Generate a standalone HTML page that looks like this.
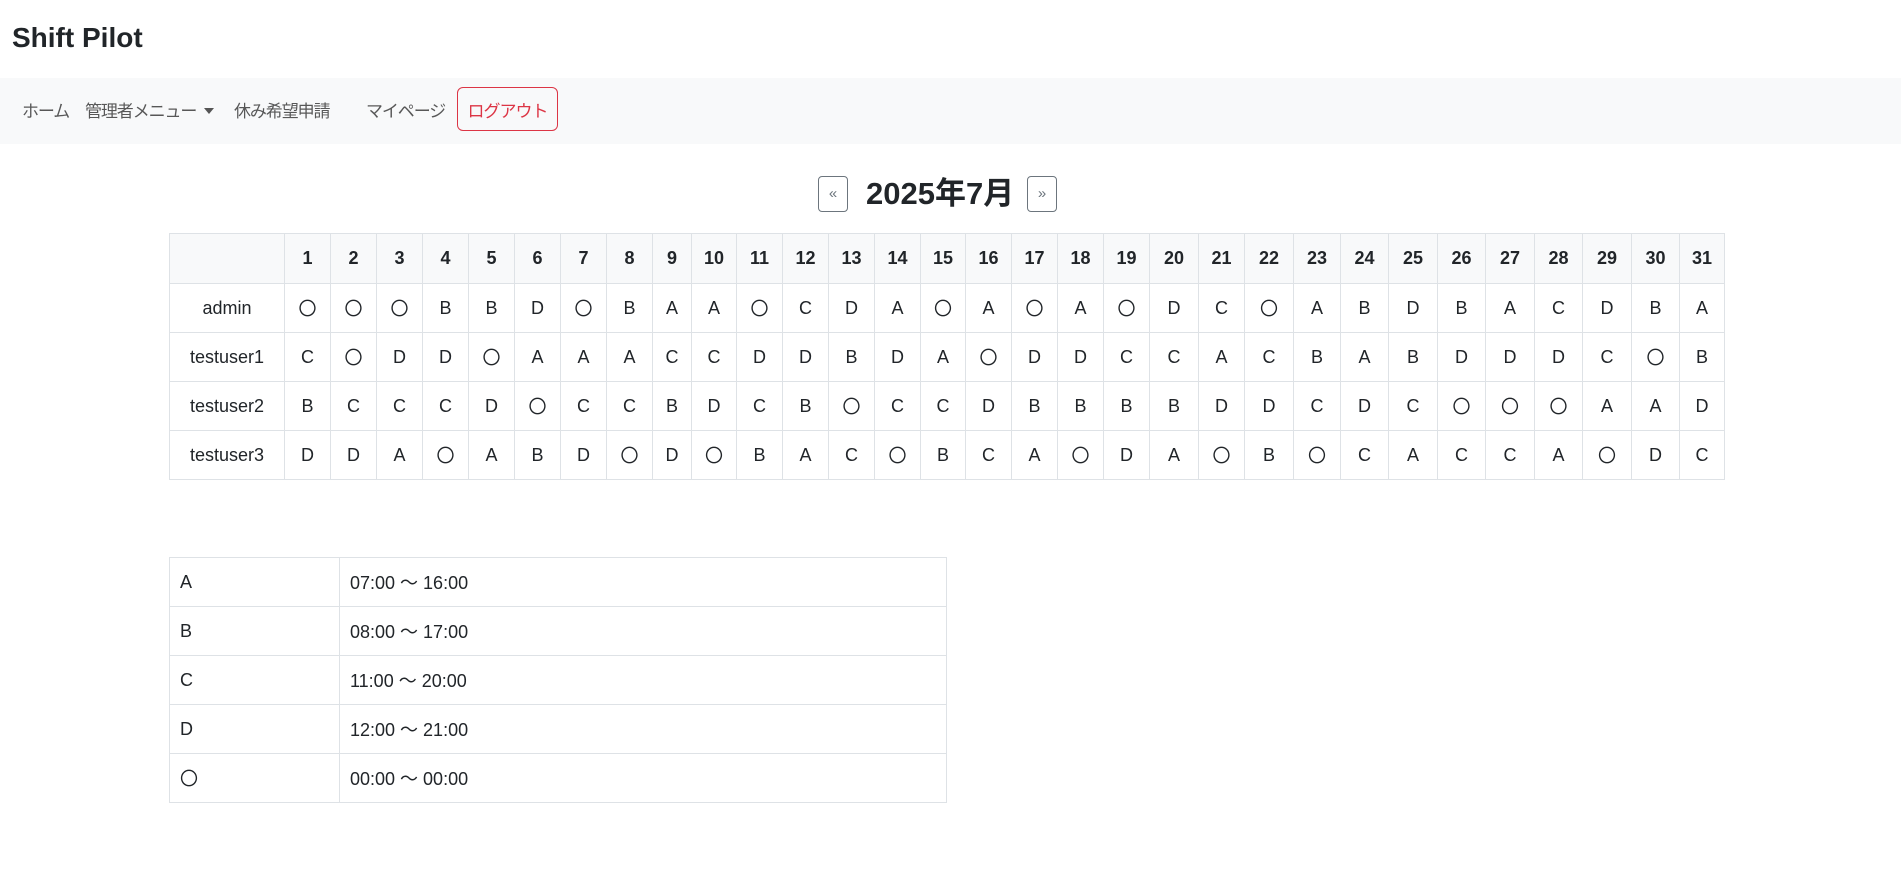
<!DOCTYPE html>
<html><head><meta charset="utf-8"><style>
*{box-sizing:border-box}
body{margin:0;width:1901px;height:887px;overflow:hidden;background:#fff;color:#212529;font-family:"Liberation Sans","Noto Sans CJK JP",sans-serif;font-size:19px}
.brand{position:absolute;left:12px;top:20px;font-size:28px;font-weight:bold;line-height:36px}
.nav{position:absolute;left:0;top:78px;width:1901px;height:66px;background:#f8f9fa}
.nav span{position:absolute;top:22px;color:rgba(0,0,0,.65);font-size:17px;line-height:24px;letter-spacing:-1.1px;white-space:nowrap}
.caret{display:inline-block;width:0;height:0;border-left:5px solid transparent;border-right:5px solid transparent;border-top:6px solid #555;vertical-align:3px;margin-left:8px}
.logout{position:absolute;left:457px;top:9px;width:101px;height:44px;border:1px solid #dc3545;border-radius:6px;color:#dc3545;font-size:17px;letter-spacing:-1px;display:flex;align-items:center;justify-content:center}
.mbtn{position:absolute;top:176px;width:30px;height:36px;border:1px solid #6c757d;border-radius:4px;color:#6c757d;font-size:15px;text-align:center;line-height:33px}
.month{position:absolute;left:866px;top:174px;font-size:31px;font-weight:bold;line-height:40px}
table{position:absolute;border-collapse:collapse;table-layout:fixed}
td,th{border:1px solid #dee2e6;padding:0;text-align:center;font-size:18px}
th{background:#f8f9fa;font-weight:bold;height:50px}
.sh td{height:49px}
.lg td{height:49px;text-align:left;padding-left:10px}
</style></head><body>
<div class="brand">Shift Pilot</div>
<div class="nav">
<span style="left:22px">ホーム</span>
<span style="left:85px">管理者メニュー<i class="caret"></i></span>
<span style="left:234px">休み希望申請</span>
<span style="left:366px">マイページ</span>
<div class="logout">ログアウト</div>
</div>
<div class="mbtn" style="left:818px">«</div>
<div class="month">2025年7月</div>
<div class="mbtn" style="left:1027px">»</div>
<table class="sh" style="left:169px;top:233px;width:1555px">
<colgroup><col style="width:115px"><col style="width:46px"><col style="width:46px"><col style="width:46px"><col style="width:46px"><col style="width:46px"><col style="width:46px"><col style="width:46px"><col style="width:46px"><col style="width:39px"><col style="width:45px"><col style="width:46px"><col style="width:46px"><col style="width:46px"><col style="width:46px"><col style="width:45px"><col style="width:46px"><col style="width:46px"><col style="width:46px"><col style="width:46px"><col style="width:49px"><col style="width:46px"><col style="width:49px"><col style="width:47px"><col style="width:48px"><col style="width:49px"><col style="width:48px"><col style="width:49px"><col style="width:48px"><col style="width:49px"><col style="width:48px"><col style="width:45px"></colgroup>
<tr><th></th><th>1</th><th>2</th><th>3</th><th>4</th><th>5</th><th>6</th><th>7</th><th>8</th><th>9</th><th>10</th><th>11</th><th>12</th><th>13</th><th>14</th><th>15</th><th>16</th><th>17</th><th>18</th><th>19</th><th>20</th><th>21</th><th>22</th><th>23</th><th>24</th><th>25</th><th>26</th><th>27</th><th>28</th><th>29</th><th>30</th><th>31</th></tr>
<tr><td>admin</td><td>〇</td><td>〇</td><td>〇</td><td>B</td><td>B</td><td>D</td><td>〇</td><td>B</td><td>A</td><td>A</td><td>〇</td><td>C</td><td>D</td><td>A</td><td>〇</td><td>A</td><td>〇</td><td>A</td><td>〇</td><td>D</td><td>C</td><td>〇</td><td>A</td><td>B</td><td>D</td><td>B</td><td>A</td><td>C</td><td>D</td><td>B</td><td>A</td></tr>
<tr><td>testuser1</td><td>C</td><td>〇</td><td>D</td><td>D</td><td>〇</td><td>A</td><td>A</td><td>A</td><td>C</td><td>C</td><td>D</td><td>D</td><td>B</td><td>D</td><td>A</td><td>〇</td><td>D</td><td>D</td><td>C</td><td>C</td><td>A</td><td>C</td><td>B</td><td>A</td><td>B</td><td>D</td><td>D</td><td>D</td><td>C</td><td>〇</td><td>B</td></tr>
<tr><td>testuser2</td><td>B</td><td>C</td><td>C</td><td>C</td><td>D</td><td>〇</td><td>C</td><td>C</td><td>B</td><td>D</td><td>C</td><td>B</td><td>〇</td><td>C</td><td>C</td><td>D</td><td>B</td><td>B</td><td>B</td><td>B</td><td>D</td><td>D</td><td>C</td><td>D</td><td>C</td><td>〇</td><td>〇</td><td>〇</td><td>A</td><td>A</td><td>D</td></tr>
<tr><td>testuser3</td><td>D</td><td>D</td><td>A</td><td>〇</td><td>A</td><td>B</td><td>D</td><td>〇</td><td>D</td><td>〇</td><td>B</td><td>A</td><td>C</td><td>〇</td><td>B</td><td>C</td><td>A</td><td>〇</td><td>D</td><td>A</td><td>〇</td><td>B</td><td>〇</td><td>C</td><td>A</td><td>C</td><td>C</td><td>A</td><td>〇</td><td>D</td><td>C</td></tr>
</table>
<table class="lg" style="left:169px;top:557px;width:777px">
<colgroup><col style="width:170px"><col style="width:607px"></colgroup>
<tr><td>A</td><td>07:00 〜 16:00</td></tr>
<tr><td>B</td><td>08:00 〜 17:00</td></tr>
<tr><td>C</td><td>11:00 〜 20:00</td></tr>
<tr><td>D</td><td>12:00 〜 21:00</td></tr>
<tr><td>〇</td><td>00:00 〜 00:00</td></tr>
</table>
</body></html>
